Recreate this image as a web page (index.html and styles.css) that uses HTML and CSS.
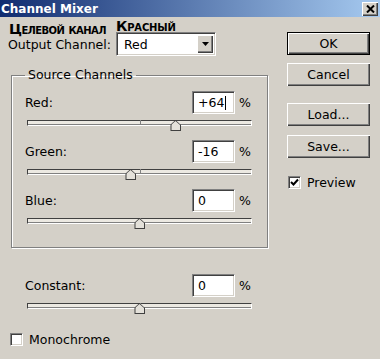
FILE: index.html
```html
<!DOCTYPE html>
<html lang="en">
  <head>
    <meta charset="UTF-8" />
    <meta name="viewport" content="width=device-width, initial-scale=1.0" />
    <title>Channel Mixer</title>
    <link rel="stylesheet" href="styles.css">
  </head>
  <body>
    <div class="titlebar">
      <span class="title">Channel Mixer</span>
      <span class="close-btn">
        <svg width="9" height="8" viewBox="0 0 9 8">
          <path d="M1 0.5 L8 7.5 M8 0.5 L1 7.5" stroke="#000" stroke-width="2" />
        </svg>
      </span>
    </div>

    <div class="main">
      <div class="left">
        <!-- Output channel with the annotations -->
        <div class="output">
          <div class="note note-target">Целевой канал</div>
          <div class="note">Красный</div>
          <label class="output-label">Output Channel:</label>
          <div class="select">
            <span>Red</span>
            <span class="select-btn">
              <svg width="7" height="4" viewBox="0 0 7 4"><path d="M0 0 H7 L3.5 4 Z" fill="#000" /></svg>
            </span>
          </div>
        </div>

        <!-- Source channels -->
        <fieldset class="group">
          <legend>Source Channels</legend>

          <div class="channel">
            <div class="channel-row">
              <label>Red:</label>
              <div class="field">+64<span class="caret"></span></div>
              <span class="pct">%</span>
            </div>
            <div class="slider">
              <div class="track"><span class="notch"></span></div>
              <span class="thumb" style="left: 66%"></span>
            </div>
          </div>

          <div class="channel">
            <div class="channel-row">
              <label>Green:</label>
              <div class="field">-16</div>
              <span class="pct">%</span>
            </div>
            <div class="slider">
              <div class="track"><span class="notch"></span></div>
              <span class="thumb" style="left: 46%"></span>
            </div>
          </div>

          <div class="channel">
            <div class="channel-row">
              <label>Blue:</label>
              <div class="field">0</div>
              <span class="pct">%</span>
            </div>
            <div class="slider">
              <div class="track"><span class="notch"></span></div>
              <span class="thumb" style="left: 50%"></span>
            </div>
          </div>
        </fieldset>

        <div class="channel constant">
          <div class="channel-row">
            <label>Constant:</label>
            <div class="field">0</div>
            <span class="pct">%</span>
          </div>
          <div class="slider">
            <div class="track"><span class="notch"></span></div>
            <span class="thumb" style="left: 50%"></span>
          </div>
        </div>

        <label class="check mono"><span class="box"></span>Monochrome</label>
      </div>

      <div class="right">
        <div class="btn btn-default">OK</div>
        <div class="btn btn-cancel">Cancel</div>
        <div class="btn btn-load">Load...</div>
        <div class="btn btn-save">Save...</div>
        <label class="check preview">
          <span class="box">
            <svg width="9" height="9" viewBox="0 0 9 9"><path d="M1 4 L3.5 6.5 L8 1.5" fill="none" stroke="#000" stroke-width="2" /></svg>
          </span>
          Preview
        </label>
      </div>
    </div>
  </body>
</html>
```

FILE: styles.css
```css
body {
  margin: 0;
  padding: 0;
  width: 380px;
  height: 359px;
  overflow: hidden;
  background-color: #d4d0c8;
  color: #000;
  font-family: "DejaVu Sans", Verdana, sans-serif;
  font-size: 12.5px;
}
.titlebar {
  height: 17px;
  display: flex;
  align-items: center;
  justify-content: space-between;
  background: linear-gradient(to right, #102c70, #a6caf0);
  color: #fff;
}
.title {
  padding-left: 1px;
  font-weight: bold;
  font-size: 12px;
}
.close-btn {
  width: 16px;
  height: 14px;
  margin-right: 2px;
  display: flex;
  align-items: center;
  justify-content: center;
  background-color: #d4d0c8;
  box-shadow: inset 1px 1px #fff, inset -1px -1px #404040, inset -2px -2px #808080;
}
.main {
  display: flex;
  padding-top: 3px;
}
.left {
  width: 260px;
  padding-left: 8px;
}
.right {
  margin-left: 19px;
  padding-top: 12px;
  width: 83px;
}

/* output channel */
.output {
  display: grid;
  grid-template-columns: 108px 100px;
  align-items: end;
}
.note {
  font-weight: bold;
  font-variant: small-caps;
  font-size: 14px;
  line-height: 12px;
  letter-spacing: -0.2px;
}
.note-target {
  margin-left: 1px;
  margin-bottom: -3px;
  letter-spacing: -0.6px;
}
.output-label {
  align-self: center;
  padding-top: 2px;
  line-height: 14px;
}
.select {
  height: 24px;
  box-sizing: border-box;
  display: flex;
  align-items: center;
  justify-content: space-between;
  padding: 2px 2px 2px 7px;
  background-color: #fff;
  border: 1px solid;
  border-color: #808080 #fff #fff #808080;
  box-shadow: inset 1px 1px #404040, inset -1px -1px #d4d0c8;
}
.select-btn {
  width: 16px;
  height: 18px;
  display: flex;
  align-items: center;
  justify-content: center;
  background-color: #d4d0c8;
  box-shadow: inset 1px 1px #fff, inset -1px -1px #404040, inset -2px -2px #808080;
}

/* group box */
.group {
  width: 257px;
  box-sizing: border-box;
  margin: 11px 0 0 3px;
  padding: 8px 14px 9px 13px;
  border: 1px solid #808080;
  box-shadow: inset 1px 1px #fff, 1px 1px #fff;
}
.group legend {
  padding: 0 3px;
  line-height: 16px;
}

/* channel rows */
.channel {
  margin-bottom: 7px;
}
.channel-row {
  display: flex;
  align-items: center;
  height: 23px;
}
.channel-row label {
  flex: 1;
}
.field {
  width: 43px;
  height: 23px;
  box-sizing: border-box;
  padding: 3px 0 0 5px;
  background-color: #fff;
  border: 1px solid;
  border-color: #808080 #fff #fff #808080;
  box-shadow: inset 1px 1px #404040, inset -1px -1px #d4d0c8;
}
.caret {
  display: inline-block;
  width: 1px;
  height: 14px;
  margin-left: 1px;
  vertical-align: -3px;
  background-color: #000;
}
.pct {
  width: 14px;
  padding-left: 4px;
}
.slider {
  position: relative;
  height: 13px;
  margin: 6px 1px 0 2px;
}
.track {
  position: relative;
  margin-top: 4px;
  height: 6px;
  box-sizing: border-box;
  background-color: #ece9e2;
  border: 1px solid;
  border-color: #404040 #fff #fff #404040;
  box-shadow: inset 0 -1px #808080;
}
.notch {
  position: absolute;
  left: 50%;
  top: -1px;
  width: 1px;
  height: 5px;
  background-color: #808080;
}
.thumb {
  position: absolute;
  top: 0;
  width: 11px;
  height: 11px;
  transform: translateX(-50%);
  background-color: #404040;
  clip-path: polygon(50% 0, 100% 45%, 100% 100%, 0 100%, 0 45%);
}
.thumb::after {
  content: "";
  position: absolute;
  left: 1px;
  top: 1px;
  right: 1px;
  bottom: 1px;
  background-color: #e4e1da;
  clip-path: polygon(50% 0, 100% 45%, 100% 100%, 0 100%, 0 45%);
}
.constant {
  width: 228px;
  margin: 26px 0 0 17px;
}

/* checkboxes */
.check {
  display: flex;
  align-items: center;
  gap: 6px;
}
.box {
  width: 13px;
  height: 13px;
  box-sizing: border-box;
  display: flex;
  align-items: center;
  justify-content: center;
  background-color: #fff;
  border: 1px solid;
  border-color: #808080 #fff #fff #808080;
  box-shadow: inset 1px 1px #404040, inset -1px -1px #d4d0c8;
}
.mono {
  margin: 16px 0 0 2px;
}
.preview {
  margin: 17px 0 0 1px;
}

/* buttons */
.btn {
  height: 23px;
  box-sizing: border-box;
  display: flex;
  align-items: center;
  justify-content: center;
  background-color: #d4d0c8;
  box-shadow: inset 1px 1px #fff, inset -1px -1px #404040, inset -2px -2px #808080;
}
.btn-default {
  border: 1px solid #000;
}
.btn-cancel {
  margin-top: 8px;
}
.btn-load {
  margin-top: 17px;
}
.btn-save {
  margin-top: 9px;
}
```
